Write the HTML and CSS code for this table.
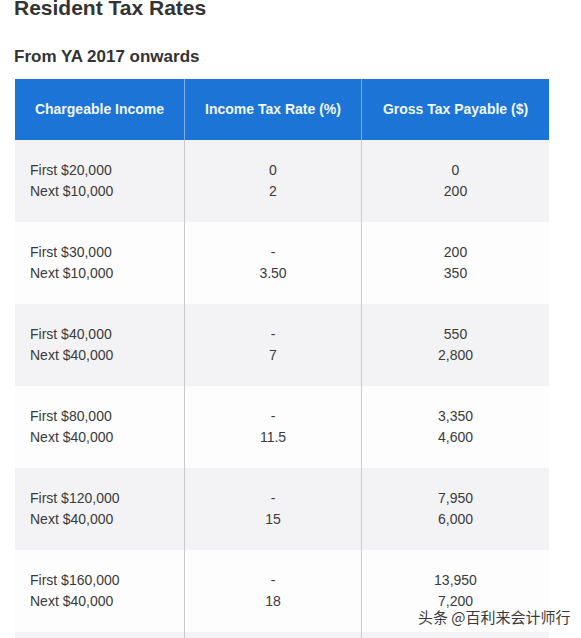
FILE: index.html
```html
<!DOCTYPE html>
<html lang="en">
<head>
<meta charset="utf-8">
<title>Resident Tax Rates</title>
<link rel="stylesheet" href="styles.css">
</head>
<body>
<div class="page">
  <h1 class="title">Resident Tax Rates</h1>
  <h2 class="subtitle">From YA 2017 onwards</h2>
  <div class="table">
    <div class="row head">
      <div class="cell c1">Chargeable Income</div>
      <div class="cell c2">Income Tax Rate (%)</div>
      <div class="cell c3">Gross Tax Payable ($)</div>
    </div>
    <div class="row alt">
      <div class="cell c1"><span>First $20,000</span><span>Next $10,000</span></div>
      <div class="cell c2"><span>0</span><span>2</span></div>
      <div class="cell c3"><span>0</span><span>200</span></div>
    </div>
    <div class="row">
      <div class="cell c1"><span>First $30,000</span><span>Next $10,000</span></div>
      <div class="cell c2"><span>-</span><span>3.50</span></div>
      <div class="cell c3"><span>200</span><span>350</span></div>
    </div>
    <div class="row alt">
      <div class="cell c1"><span>First $40,000</span><span>Next $40,000</span></div>
      <div class="cell c2"><span>-</span><span>7</span></div>
      <div class="cell c3"><span>550</span><span>2,800</span></div>
    </div>
    <div class="row">
      <div class="cell c1"><span>First $80,000</span><span>Next $40,000</span></div>
      <div class="cell c2"><span>-</span><span>11.5</span></div>
      <div class="cell c3"><span>3,350</span><span>4,600</span></div>
    </div>
    <div class="row alt">
      <div class="cell c1"><span>First $120,000</span><span>Next $40,000</span></div>
      <div class="cell c2"><span>-</span><span>15</span></div>
      <div class="cell c3"><span>7,950</span><span>6,000</span></div>
    </div>
    <div class="row">
      <div class="cell c1"><span>First $160,000</span><span>Next $40,000</span></div>
      <div class="cell c2"><span>-</span><span>18</span></div>
      <div class="cell c3"><span>13,950</span><span>7,200</span></div>
    </div>
    <div class="row alt">
      <div class="cell c1"></div>
      <div class="cell c2"></div>
      <div class="cell c3"></div>
    </div>
  </div>
</div>
<div class="watermark">头条 @百利来会计师行</div>
</body>
</html>
```
FILE: styles.css
```css
html, body {
  margin: 0;
  padding: 0;
  background: #fff;
  overflow: hidden;
}
body {
  font-family: "Liberation Sans", Arial, sans-serif;
  color: #333;
}
.page {
  padding: 0 0 0 14px;
}
.title {
  margin: -3px 0 0 0;
  font-size: 21px;
  line-height: 21px;
  font-weight: bold;
  color: #333;
}
.subtitle {
  margin: 29px 0 0 0;
  font-size: 17px;
  line-height: 20px;
  font-weight: bold;
  color: #333;
}
.table {
  margin: 12px 0 0 1px;
  width: 534px;
  display: flex;
  flex-direction: column;
}
.row {
  display: grid;
  grid-template-columns: 170px 177px 187px;
  height: 82px;
  background: #fdfdfe;
}
.row.alt {
  background: #f3f3f5;
}
.row.head {
  height: 61px;
  background: #1b74d6;
  font-weight: bold;
}
.cell {
  display: flex;
  flex-direction: column;
  justify-content: center;
  font-size: 14px;
  line-height: 21px;
  color: #3a3a3a;
}
.row.head .cell {
  color: #f2f7ff;
  font-size: 14px;
  align-items: center;
  text-align: center;
}
.cell.c1 {
  padding-left: 15px;
  border-right: 1px solid #c9c9cc;
}
.cell.c2 {
  align-items: center;
  border-right: 1px solid #c9c9cc;
}
.cell.c3 {
  align-items: center;
}
.row.head .cell.c1 {
  padding-left: 0;
  border-right-color: #7fb2ea;
}
.row.head .cell.c2 {
  border-right-color: #7fb2ea;
}
.watermark {
  position: absolute;
  left: 418px;
  top: 606px;
  font-family: "Noto Sans CJK SC", sans-serif;
  font-size: 15px;
  line-height: 22px;
  color: #3a3a3a;
  text-shadow: 0 0 2px #fff, 0 0 2px #fff;
}
```
